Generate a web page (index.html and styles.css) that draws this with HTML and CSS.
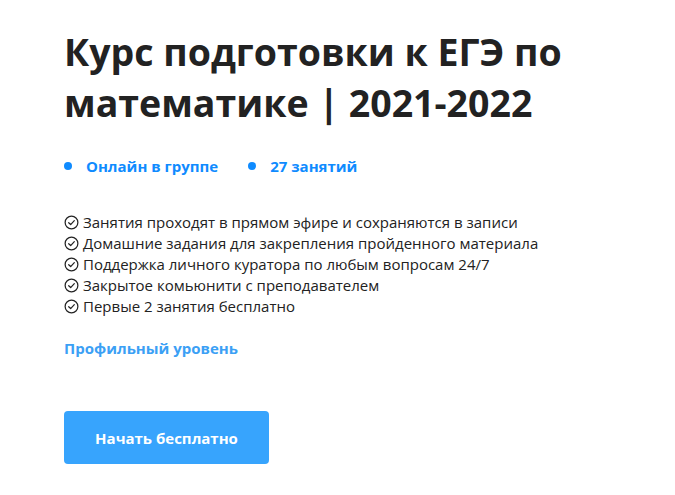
FILE: index.html
```html
<!DOCTYPE html>
<html lang="ru">
<head>
<meta charset="utf-8">
<link rel="stylesheet" href="styles.css">
</head>
<body>
<main class="course">
  <h1 class="title">Курс подготовки к ЕГЭ по математике | 2021-2022</h1>
  <ul class="tags">
    <li class="tag">Онлайн в группе</li>
    <li class="tag">27 занятий</li>
  </ul>
  <ul class="features">
    <li class="feature"><svg class="check" viewBox="0 0 16 16" width="15" height="15"><circle cx="8" cy="8" r="6.8" fill="none" stroke="#222" stroke-width="1.3"/><path d="M5 8.2 L7.1 10.2 L11 6" fill="none" stroke="#222" stroke-width="1.3" stroke-linecap="round" stroke-linejoin="round"/></svg>Занятия проходят в прямом эфире и сохраняются в записи</li>
    <li class="feature"><svg class="check" viewBox="0 0 16 16" width="15" height="15"><circle cx="8" cy="8" r="6.8" fill="none" stroke="#222" stroke-width="1.3"/><path d="M5 8.2 L7.1 10.2 L11 6" fill="none" stroke="#222" stroke-width="1.3" stroke-linecap="round" stroke-linejoin="round"/></svg>Домашние задания для закрепления пройденного материала</li>
    <li class="feature"><svg class="check" viewBox="0 0 16 16" width="15" height="15"><circle cx="8" cy="8" r="6.8" fill="none" stroke="#222" stroke-width="1.3"/><path d="M5 8.2 L7.1 10.2 L11 6" fill="none" stroke="#222" stroke-width="1.3" stroke-linecap="round" stroke-linejoin="round"/></svg>Поддержка личного куратора по любым вопросам 24/7</li>
    <li class="feature"><svg class="check" viewBox="0 0 16 16" width="15" height="15"><circle cx="8" cy="8" r="6.8" fill="none" stroke="#222" stroke-width="1.3"/><path d="M5 8.2 L7.1 10.2 L11 6" fill="none" stroke="#222" stroke-width="1.3" stroke-linecap="round" stroke-linejoin="round"/></svg>Закрытое комьюнити с преподавателем</li>
    <li class="feature"><svg class="check" viewBox="0 0 16 16" width="15" height="15"><circle cx="8" cy="8" r="6.8" fill="none" stroke="#222" stroke-width="1.3"/><path d="M5 8.2 L7.1 10.2 L11 6" fill="none" stroke="#222" stroke-width="1.3" stroke-linecap="round" stroke-linejoin="round"/></svg>Первые 2 занятия бесплатно</li>
  </ul>
  <p class="level">Профильный уровень</p>
  <button class="cta">Начать бесплатно</button>
</main>
</body>
</html>
```
FILE: styles.css
```css
* { box-sizing: border-box; }
html, body { margin: 0; padding: 0; background: #fff; }
body { font-family: "Open Sans", "Noto Sans", sans-serif; color: #222; }
.course { padding: 26px 0 0 64px; display: flex; flex-direction: column; align-items: flex-start; }
.title { margin: 0; font-size: 37.5px; line-height: 51px; font-weight: 700; color: #222; width: 540px; letter-spacing: 0; }
.tags { list-style: none; margin: 28px 0 0 0; padding: 0; display: flex; gap: 30px; }
.tag { display: flex; align-items: center; gap: 14px; font-size: 15px; font-weight: 700; color: #0f8bff; line-height: 20px; }
.tag::before { content: ""; width: 8px; height: 8px; border-radius: 50%; background: #0f8bff; }
.features { list-style: none; margin: 36px 0 0 0; padding: 0; }
.feature { display: flex; align-items: center; gap: 4px; font-size: 15px; line-height: 21px; color: #222; }
.check { flex: none; }
.level { margin: 21px 0 0 0; font-size: 15px; font-weight: 700; color: #3ba0f5; line-height: 20px; }
.cta { margin-top: 53px; width: 205px; height: 53px; border: none; border-radius: 4px; background: #37a4fd; color: #fff; font-family: inherit; font-size: 15px; font-weight: 700; }
```
